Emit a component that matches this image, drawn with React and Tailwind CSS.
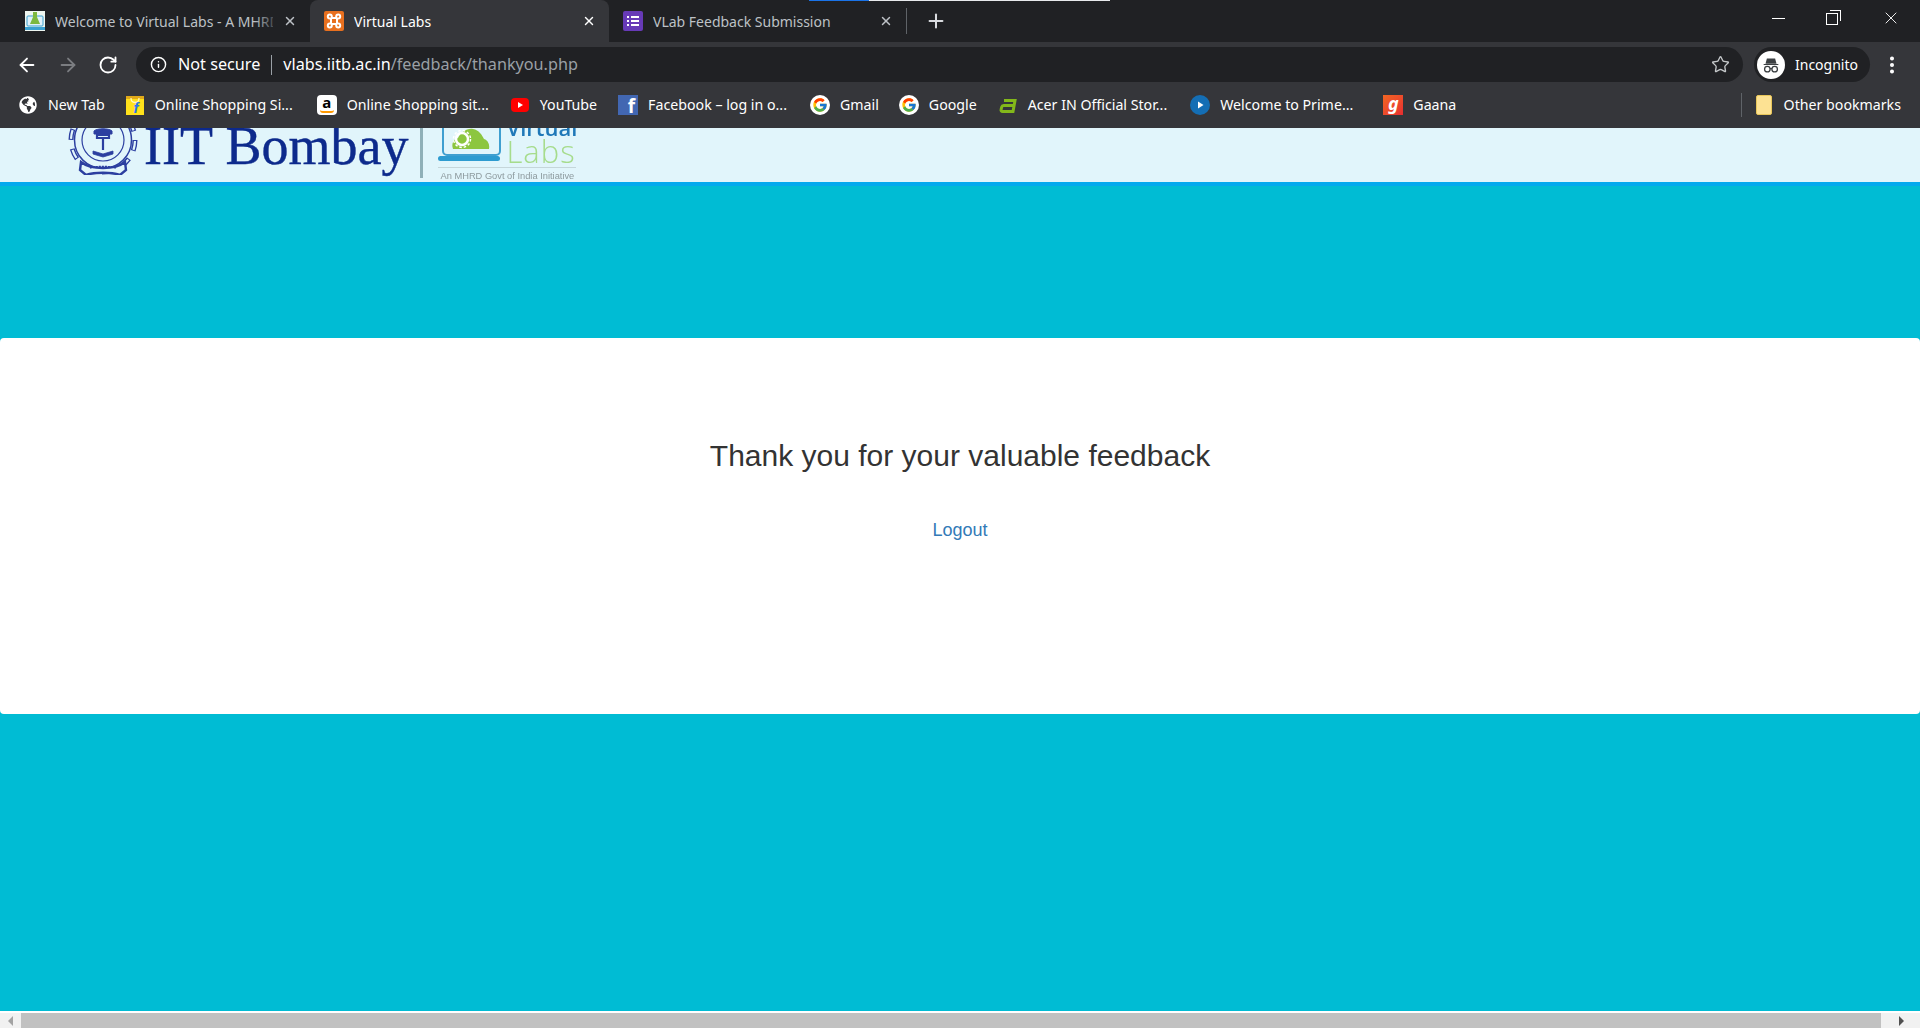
import { ArrowLeft, ArrowRight, RotateCw, Info, Star, X, Plus, EllipsisVertical } from "lucide-react";
import { FcGoogle } from "react-icons/fc";
import { FaGlobeAmericas } from "react-icons/fa";

const chromeFont = "font-['Noto_Sans',sans-serif]";

const LabFavicon = () => (
  <svg viewBox="0 0 20 20" className="w-5 h-5 shrink-0">
    <rect width="20" height="20" fill="#eef6f0" />
    <rect x="2" y="5" width="16" height="10" rx="1" fill="#dff1fa" stroke="#3aa0d0" />
    <path d="M8 1h4v5l3 7H5l3-7z" fill="#7cb83e" />
    <rect y="16" width="20" height="3" fill="#3aa0d0" />
  </svg>
);

const XamppFavicon = () => (
  <svg viewBox="0 0 20 20" className="w-5 h-5 shrink-0">
    <rect width="20" height="20" rx="2" fill="#e8701f" />
    <path
      d="M7 7.500H5.800a2 2 0 1 1 2-2V7h4.400V5.500a2 2 0 1 1 2 2H13v5h1.200a2 2 0 1 1-2 2V13H7.800v1.500a2 2 0 1 1-2-2H7z"
      fill="none"
      stroke="#fff"
      strokeWidth="2"
    />
  </svg>
);

const FormsFavicon = () => (
  <svg viewBox="0 0 20 20" className="w-5 h-5 shrink-0">
    <rect width="20" height="20" rx="2" fill="#673ab7" />
    <path d="M4 6h2M8 6h8M4 10h2M8 10h8M4 14h2M8 14h8" stroke="#fff" strokeWidth="2" />
  </svg>
);

const tabs = [
  { title: "Welcome to Virtual Labs - A MHRD Govt", icon: LabFavicon, width: "w-[300px]", pad: "pl-[15px]", fade: "from-[#202124]" },
  { title: "Virtual Labs", icon: XamppFavicon, width: "w-[299px]", pad: "pl-[14px]", active: true, fade: "" },
  { title: "VLab Feedback Submission", icon: FormsFavicon, width: "w-[297px]", pad: "pl-[14px]", fade: "" },
];

const Flipkart = () => (
  <svg viewBox="0 0 20 20" className="w-5 h-5">
    <path d="M1 4h18v16H1z" fill="#ffe11b" />
    <path d="M1 1h18v3H1z" fill="#e0a91a" />
    <path d="M6 3c0 6 8 6 8 0" fill="none" stroke="#fff6c0" strokeWidth="1.300" />
    <text x="11" y="18" fontSize="15" fontWeight="700" fontStyle="italic" textAnchor="middle" fill="#2874f0" fontFamily="Liberation Sans, sans-serif">f</text>
  </svg>
);
const Amazon = () => (
  <span className="relative w-5 h-5 bg-white rounded-sm flex justify-center text-black text-[15px] font-bold leading-[15px]">
    a
    <span className="absolute bottom-[2px] left-[3px] w-[14px] h-[3px] border-b-2 border-[#f90] rounded-b-full" />
  </span>
);
const YouTube = () => (
  <svg viewBox="0 0 20 20" className="w-5 h-5">
    <rect x="1" y="3" width="18" height="14" rx="4" fill="#f00" />
    <path d="M8 7l5 3-5 3z" fill="#fff" />
  </svg>
);
const Facebook = () => (
  <span className="w-5 h-5 bg-[#4267b2] flex items-end justify-end pr-[3px] text-white text-[19px] font-bold leading-[18px]">f</span>
);
const Google = () => (
  <span className="w-5 h-5 bg-white rounded-full flex items-center justify-center">
    <FcGoogle className="w-4 h-4" />
  </span>
);
const Acer = () => (
  <svg viewBox="0 0 20 20" className="w-5 h-5">
    <path d="M6 5.500h11l-2 11H4.500a1.500 1.500 0 0 1-1.400-2l.6-2.500a2 2 0 0 1 2-1.500h10" fill="none" stroke="#83b81a" strokeWidth="3" />
  </svg>
);
const Prime = () => (
  <svg viewBox="0 0 20 20" className="w-5 h-5">
    <circle cx="10" cy="10" r="10" fill="#146eb4" />
    <path d="M8 6.500l5.500 3.500L8 13.500z" fill="#fff" />
  </svg>
);
const Gaana = () => (
  <span className="w-5 h-5 bg-gradient-to-br from-[#f26522] to-[#e72c30] flex items-center justify-center text-white text-[18px] font-bold italic leading-none pb-[4px]">g</span>
);
const Globe = () => (
  <span className="w-[18px] h-[18px] rounded-full bg-[#35363a] flex items-center justify-center mr-px">
    <FaGlobeAmericas className="w-[18px] h-[18px] text-white" />
  </span>
);

const bookmarks = [
  { label: "New Tab", icon: Globe, gap: "ml-0" },
  { label: "Online Shopping Si...", icon: Flipkart, gap: "ml-[20px]" },
  { label: "Online Shopping sit...", icon: Amazon, gap: "ml-[24px]" },
  { label: "YouTube", icon: YouTube, gap: "ml-[21px]" },
  { label: "Facebook – log in o...", icon: Facebook, gap: "ml-[21px]" },
  { label: "Gmail", icon: Google, gap: "ml-[23px]" },
  { label: "Google", icon: Google, gap: "ml-[20px]" },
  { label: "Acer IN Official Stor...", icon: Acer, gap: "ml-[21px]" },
  { label: "Welcome to Prime...", icon: Prime, gap: "ml-[23px]" },
  { label: "Gaana", icon: Gaana, gap: "ml-[30px]" },
];

const TabStrip = () => (
  <div className="relative h-[42px] shrink-0 bg-[#202124] flex pl-[10px]">
    <div className="absolute top-0 left-[809px] h-px w-[60px] bg-[#1a73e8]" />
    <div className="absolute top-0 left-[869px] h-px w-[241px] bg-[#e8eaed]" />
    {tabs.map((tab) => (
      <div
        key={tab.title}
        className={`relative flex items-center gap-[10px] pr-[13px] ${tab.width} ${tab.pad} ${tab.active ? "bg-[#35363a] rounded-t-lg text-white" : "text-[#bdc1c6]"}`}
      >
        <tab.icon />
        <span className="flex-1 overflow-hidden whitespace-nowrap text-[14px]">{tab.title}</span>
        {tab.fade && <span className={`absolute right-[30px] w-[26px] h-[20px] bg-gradient-to-l ${tab.fade} to-transparent`} />}
        <X className="w-[14px] h-[14px] shrink-0" strokeWidth={2.5} />
      </div>
    ))}
    <div className="w-px h-[26px] self-center bg-[#5f6368]" />
    <Plus className="w-[22px] h-[22px] ml-[18px] self-center text-[#dadce0]" strokeWidth={2.2} />
    <div className="ml-auto flex items-start text-white">
      <div className="w-[55px] h-[36px] flex items-center justify-center">
        <span className="w-[13px] h-px bg-white" />
      </div>
      <div className="w-[56px] h-[36px] flex items-center justify-center pr-[4px]">
        <span className="relative w-[12px] h-[12px] border border-white mt-[1px]">
          <span className="absolute -top-[4px] -right-[4px] w-[11px] h-[11px] border-t border-r border-white" />
        </span>
      </div>
      <div className="w-[58px] h-[36px] flex items-center justify-center">
        <X className="w-[20px] h-[20px]" strokeWidth={1.1} />
      </div>
    </div>
  </div>
);

const Toolbar = () => (
  <div className="h-[40px] shrink-0 bg-[#35363a] flex items-start pt-[5px]">
    <div className="flex items-center h-[35px] text-white">
      <ArrowLeft className="w-[22px] h-[22px] ml-[16px]" strokeWidth={2} />
      <ArrowRight className="w-[22px] h-[22px] ml-[19px] text-[#7b7d81]" strokeWidth={2} />
      <RotateCw className="w-[20px] h-[20px] ml-[19px]" strokeWidth={2.2} />
    </div>
    <div className="ml-[18px] w-[1607px] h-[35px] rounded-full bg-[#202124] flex items-center pl-[14px] pr-[13px] text-[16.2px]">
      <Info className="w-[17px] h-[17px] text-white" strokeWidth={2} />
      <span className="ml-[11px] text-white">Not secure</span>
      <span className="ml-[11px] w-px h-[20px] bg-[#9aa0a6]" />
      <span className="ml-[11px] text-white">vlabs.iitb.ac.in</span>
      <span className="text-[#9aa0a6]">/feedback/thankyou.php</span>
      <Star className="ml-auto w-[19px] h-[19px] text-[#c4c7c9]" strokeWidth={1.7} />
    </div>
    <div className="ml-[11px] w-[116px] h-[35px] rounded-full bg-[#202124] flex items-center pl-[3px] text-white text-[14px]">
      <span className="w-[28px] h-[28px] rounded-full bg-white flex items-center justify-center">
        <svg viewBox="0 0 24 24" className="w-[22px] h-[22px]">
          <path d="M4 11h16v1H4zM7.500 5h9l1.500 5.500H6z" fill="#3c4043" />
          <circle cx="8" cy="16.500" r="3" fill="none" stroke="#3c4043" strokeWidth="1.400" />
          <circle cx="16" cy="16.500" r="3" fill="none" stroke="#3c4043" strokeWidth="1.400" />
          <path d="M11 16h2" stroke="#3c4043" strokeWidth="1.400" />
        </svg>
      </span>
      <span className="ml-[10px]">Incognito</span>
    </div>
    <div className="h-[35px] flex items-center ml-[11px] text-white">
      <EllipsisVertical className="w-[22px] h-[22px]" strokeWidth={2.4} />
    </div>
  </div>
);

const BookmarkBar = () => (
  <div className="h-[46px] shrink-0 bg-[#35363a] flex items-center pl-[19px] pr-[19px] text-white text-[14.2px]">
    <div className="flex items-center">
      {bookmarks.map((item) => (
        <div key={item.label} className={`flex items-center gap-[10px] whitespace-nowrap ${item.gap}`}>
          <item.icon />
          <span>{item.label}</span>
        </div>
      ))}
    </div>
    <div className="ml-auto flex items-center">
      <span className="w-px h-[24px] bg-[#5f6368] mr-[14px]" />
      <span className="w-[16px] h-[20px] rounded-[2px] bg-[#fde293] border border-[#e8c65a] mr-[12px]" />
      <span>Other bookmarks</span>
    </div>
  </div>
);

// drawn in page coordinates so the crop at the top of the header lines up
const Emblem = () => (
  <svg viewBox="68 113 70 62" className="w-[70px] h-[62px] shrink-0" fill="none" stroke="#2c3fa0">
    <circle cx="103" cy="140" r="32" strokeWidth="5" strokeDasharray="11 9.100" />
    <circle cx="103" cy="140" r="32" strokeWidth="2.200" strokeDasharray="9 11.100" strokeDashoffset="-1" stroke="#e1f5fb" />
    <circle cx="103" cy="140" r="28.500" strokeWidth="1.500" />
    <circle cx="103" cy="140" r="21" strokeWidth="1.200" />
    <path d="M94 131c3-3 15-3 18 0v3H94z" fill="#2c3fa0" strokeWidth="1" />
    <path d="M97 135h12v3H97zM103 138v12" strokeWidth="2.200" />
    <path d="M93 151l10 3 10-3v3l-10 3-10-3z" fill="#2c3fa0" strokeWidth=".8" />
    <path d="M81 162c10 8 34 8 44 0l1 8-6 5c-9-3-25-3-34 0l-6-5z" fill="#e1f5fb" strokeWidth="2.400" />
    <path d="M90 168c7-2 19-2 26 0" strokeWidth="1.600" strokeDasharray="2 1" />
  </svg>
);

const LaptopLogo = () => (
  <svg viewBox="438 128 63 33" className="w-[63px] h-[33px] shrink-0">
    <path d="M443 120v31a4 4 0 0 0 4 4h49a4 4 0 0 0 4-4v-31" fill="none" stroke="#3f9fd0" strokeWidth="2" />
    <path d="M453 149c-2-6 1-10 5-11 3-6 9-10 15-9 6 1 9 6 11 10 4 1 6 6 5 10z" fill="#8cc63f" />
    <circle cx="462" cy="139" r="6" fill="none" stroke="#fff" strokeWidth="2.500" />
    <circle cx="462" cy="139" r="8.500" fill="none" stroke="#fff" strokeWidth="1.500" strokeDasharray="2.500 2" />
    <rect x="438" y="156" width="62" height="5" rx="2.500" fill="#2d9bd0" />
  </svg>
);

const SiteHeader = () => (
  <header className="h-[58px] shrink-0 bg-[#e1f5fb] border-b-4 border-[#03a9ee] overflow-hidden flex items-start pl-[68px]">
    <div className="-mt-[15px] flex items-start blur-[0.4px]">
      <Emblem />
      <span className="ml-[6px] mt-[2px] text-[54px] leading-[62px] text-[#0d2a8c] [-webkit-text-stroke:0.4px_#0d2a8c] font-['Liberation_Serif',serif] whitespace-nowrap">IIT Bombay</span>
      <span className="ml-[12px] mt-[15px] w-[3px] h-[50px] bg-[#8fb0b8]" />
      <div className="ml-[15px] mt-[15px] w-[138px]">
        <div className="flex items-start h-[39px]">
          <LaptopLogo />
          <div className="ml-[5px] -mt-[12px] font-['Open_Sans',sans-serif]">
            <p className="text-[22px] font-semibold leading-[22px] text-[#1f78b8] whitespace-nowrap">Virtual</p>
            <p className="text-[31px] font-light leading-[30px] -mt-[2px] tracking-[1px] text-[#a6dc8c]">Labs</p>
          </div>
        </div>
        <p className="border-t border-[#c5d6da] mt-0 pt-[2px] pl-[2px] text-[9.3px] leading-[12px] text-[#8d9a9e] whitespace-nowrap font-['Liberation_Sans',sans-serif]">An MHRD Govt of India Initiative</p>
      </div>
    </div>
  </header>
);

const ScrollBar = () => (
  <div className="h-[17px] shrink-0 bg-[#f1f1f1] border-t-2 border-white flex items-center">
    <div className="w-[21px] flex justify-center">
      <span className="w-0 h-0 border-y-[5px] border-y-transparent border-r-[5px] border-r-[#a3a3a3]" />
    </div>
    <div className="flex-1 h-full bg-[#c1c1c1]" />
    <div className="w-[39px] flex justify-center pl-[2px]">
      <span className="w-0 h-0 border-y-[5px] border-y-transparent border-l-[5px] border-l-[#505050]" />
    </div>
  </div>
);

export default function App() {
  return (
    <div className="h-screen flex flex-col overflow-hidden bg-[#00bcd4]">
      <div className={chromeFont}>
        <TabStrip />
        <Toolbar />
        <BookmarkBar />
      </div>
      <SiteHeader />
      <main className="flex-1 pt-[152px] font-['Liberation_Sans',sans-serif]">
        <div className="h-[376px] bg-white rounded-[4px] flex flex-col items-center pt-[97px]">
          <h2 className="text-[30px] leading-[42px] text-[#333]">Thank you for your valuable feedback</h2>
          <a href="#" className="mt-[41px] text-[18px] leading-[25px] text-[#337ab7]">Logout</a>
        </div>
      </main>
      <ScrollBar />
    </div>
  );
}
